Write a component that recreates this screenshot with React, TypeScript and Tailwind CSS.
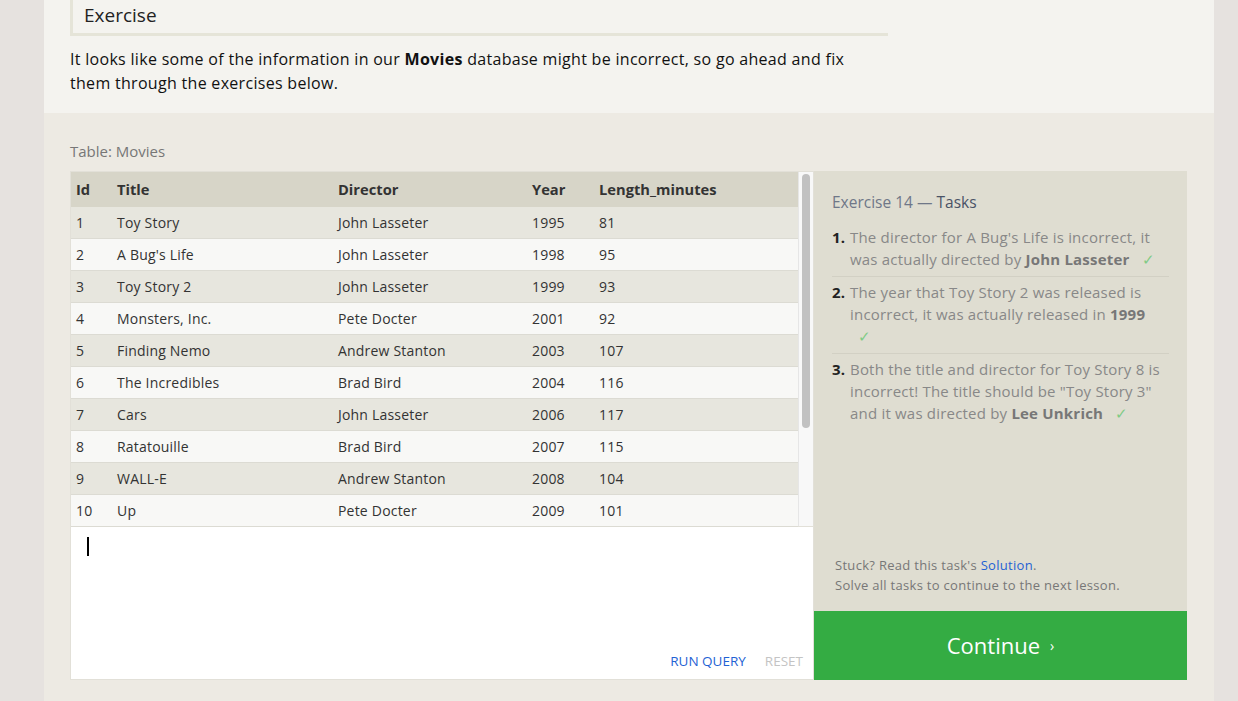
import React from 'react';

type Movie = {
    id: number;
    title: string;
    director: string;
    year: number;
    length: number;
};

const movies: Movie[] = [
    { id: 1, title: 'Toy Story', director: 'John Lasseter', year: 1995, length: 81 },
    { id: 2, title: "A Bug's Life", director: 'John Lasseter', year: 1998, length: 95 },
    { id: 3, title: 'Toy Story 2', director: 'John Lasseter', year: 1999, length: 93 },
    { id: 4, title: 'Monsters, Inc.', director: 'Pete Docter', year: 2001, length: 92 },
    { id: 5, title: 'Finding Nemo', director: 'Andrew Stanton', year: 2003, length: 107 },
    { id: 6, title: 'The Incredibles', director: 'Brad Bird', year: 2004, length: 116 },
    { id: 7, title: 'Cars', director: 'John Lasseter', year: 2006, length: 117 },
    { id: 8, title: 'Ratatouille', director: 'Brad Bird', year: 2007, length: 115 },
    { id: 9, title: 'WALL-E', director: 'Andrew Stanton', year: 2008, length: 104 },
    { id: 10, title: 'Up', director: 'Pete Docter', year: 2009, length: 101 },
];

const Check = () => <span className="ml-[8px] text-[#7fcb86]">✓</span>;

const MoviesTable = () => (
    <div className="relative h-[356px] border border-[#e2e0d8] bg-[#f8f8f6] flex">
        <div className="flex-1">
            {/* Header */}
            <div className="flex h-[35px] items-center bg-[#d7d5c8] text-[14.7px] font-bold text-[#333]">
                <div className="w-[41px] pl-[5px]">Id</div>
                <div className="w-[221px] pl-[5px]">Title</div>
                <div className="w-[194px] pl-[5px]">Director</div>
                <div className="w-[67px] pl-[5px]">Year</div>
                <div className="flex-1 pl-[5px]">Length_minutes</div>
            </div>
            {/* Rows */}
            {movies.map((m, idx) => (
                <div
                    key={m.id}
                    className={`flex h-[32px] items-center border-b border-[#dcdbd3] text-[14px] tracking-[0.2px] text-[#333] ${idx % 2 === 0 ? 'bg-[#e7e6de]' : 'bg-[#f8f8f6]'}`}
                >
                    <div className="w-[41px] pl-[5px]">{m.id}</div>
                    <div className="w-[221px] pl-[5px]">{m.title}</div>
                    <div className="w-[194px] pl-[5px]">{m.director}</div>
                    <div className="w-[67px] pl-[5px]">{m.year}</div>
                    <div className="flex-1 pl-[5px]">{m.length}</div>
                </div>
            ))}
        </div>
        {/* Scrollbar */}
        <div className="w-[15px] border-l border-[#e6e6e6] bg-[#f8f8f8] pt-[2px] pl-[3px]">
            <div className="h-[254px] w-[8px] rounded-full bg-[#c1c1c1]" />
        </div>
    </div>
);

export default function App() {
    return (
        <div
            className="min-h-screen bg-[#e6e2df] pl-[44px] pr-[24px]"
            style={{ fontFamily: '"Open Sans", "Noto Sans", sans-serif' }}
        >
            <div className="bg-[#f4f3ef]">
                {/* Top */}
                <div className="px-[26px] pb-[18px]">
                    <div className="h-[36px] w-[818px] border-l-[3px] border-b-[3px] border-[#e5e4d8] pl-[11px] text-[19px] leading-[30px] text-[#222]">
                        Exercise
                    </div>
                    <p className="mt-[11px] w-[818px] text-[16px] leading-[24px] tracking-[0.3px] text-[#111]">
                        It looks like some of the information in our <b>Movies</b> database might be incorrect, so go ahead and fix them through the exercises below.
                    </p>
                </div>

                {/* Exercise area */}
                <div className="bg-[#edeae3] px-[26px] pt-[28px] pb-[21px]">
                    <div className="mb-[10px] text-[15px] leading-[20px] text-[#777]">Table: Movies</div>
                    <div className="flex">
                        <div className="w-[744px]">
                            <MoviesTable />
                            {/* Query editor */}
                            <div className="relative h-[153px] border border-t-0 border-[#e2e0d8] bg-white">
                                <div className="absolute left-[16px] top-[10px] h-[19px] w-[2px] bg-black" />
                                <div className="absolute bottom-[8px] right-[10px] flex gap-[19px] text-[13.5px] uppercase">
                                    <span className="text-[#1f62d4]">Run Query</span>
                                    <span className="text-[#c4c4c4]">Reset</span>
                                </div>
                            </div>
                        </div>

                        {/* Tasks panel */}
                        <div className="flex w-[373px] flex-col">
                            <div className="flex h-[440px] flex-col bg-[#dfddd1] pl-[18px] pr-[18px] pt-[20px]">
                                <div className="text-[15.5px] leading-[22px] text-[#6f7788]">
                                    Exercise 14 — <span className="font-medium text-[#4a5366]">Tasks</span>
                                </div>
                                <ol className="mt-[13px] text-[15px] leading-[22px] tracking-[0.2px] text-[#888]">
                                    <li className="flex border-b border-[#d2d0c4] pb-[6px]">
                                        <span className="w-[18px] font-bold text-[#222]">1.</span>
                                        <span className="flex-1">
                                            The director for A Bug's Life is incorrect, it was actually directed by <b className="text-[#777]">John Lasseter</b>{' '}
                                            <Check />
                                        </span>
                                    </li>
                                    <li className="flex border-b border-[#d2d0c4] pt-[4px] pb-[6px]">
                                        <span className="w-[18px] font-bold text-[#222]">2.</span>
                                        <span className="flex-1">
                                            The year that Toy Story 2 was released is incorrect, it was actually released in <b className="text-[#777]">1999</b>{' '}
                                            <Check />
                                        </span>
                                    </li>
                                    <li className="flex pt-[4px]">
                                        <span className="w-[18px] font-bold text-[#222]">3.</span>
                                        <span className="flex-1">
                                            Both the title and director for Toy Story 8 is incorrect! The title should be "Toy Story 3" and it was directed by <b className="text-[#777]">Lee Unkrich</b>{' '}
                                            <Check />
                                        </span>
                                    </li>
                                </ol>
                                <div className="mt-auto mb-[16px] pl-[3px] text-[13px] leading-[20px] tracking-[0.3px] text-[#777]">
                                    <div>
                                        Stuck? Read this task's <span className="text-[#1f62d4]">Solution</span>.
                                    </div>
                                    <div>Solve all tasks to continue to the next lesson.</div>
                                </div>
                            </div>
                            <button className="flex h-[69px] items-center justify-center bg-[#34ac43] text-[22px] font-medium text-white">
                                Continue <span className="ml-[10px] text-[14px]">›</span>
                            </button>
                        </div>
                    </div>
                </div>
            </div>
        </div>
    );
}
